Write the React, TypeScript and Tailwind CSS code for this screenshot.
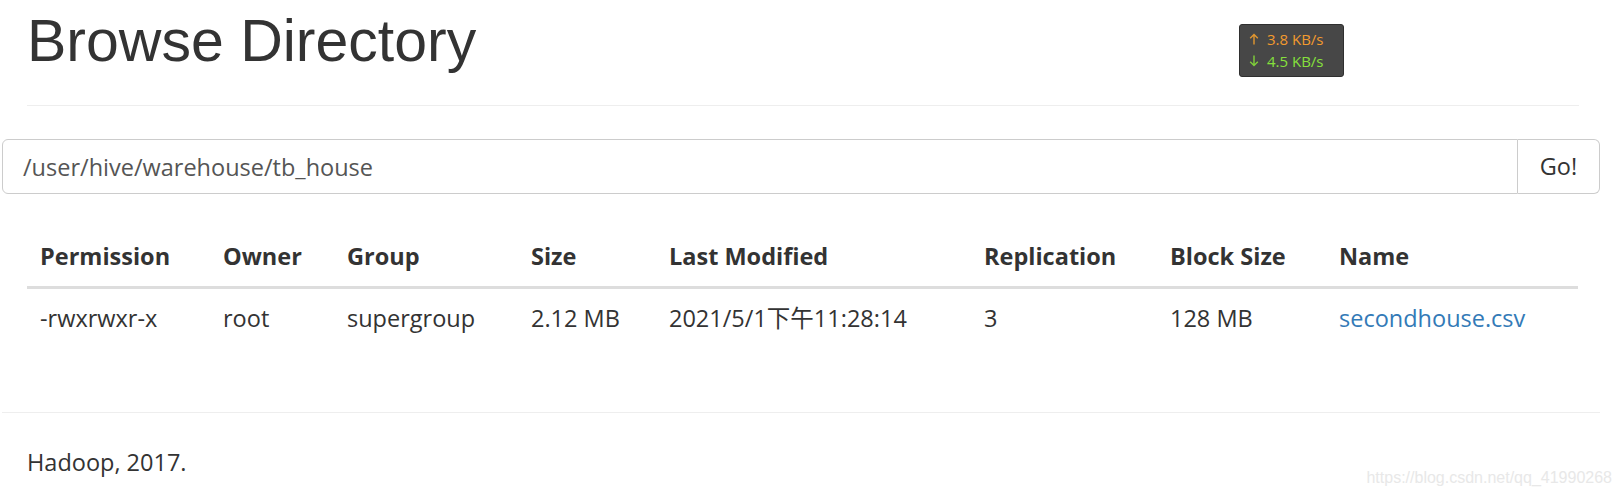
import React from "react";

const cols = ["Permission", "Owner", "Group", "Size", "Last Modified", "Replication", "Block Size", "Name"];

function UpArrow({ color }: { color: string }) {
  return (
    <svg width="10" height="12" viewBox="0 0 10 12" fill="none" stroke={color} strokeWidth="1.4">
      <path d="M5 11.5V1.5M1.2 5.2L5 1.4L8.8 5.2" />
    </svg>
  );
}

function DownArrow({ color }: { color: string }) {
  return (
    <svg width="10" height="12" viewBox="0 0 10 12" fill="none" stroke={color} strokeWidth="1.4">
      <path d="M5 0.5V10.5M1.2 6.8L5 10.6L8.8 6.8" />
    </svg>
  );
}

export default function App() {
  const body = { fontFamily: '"Open Sans", "Noto Sans CJK SC", sans-serif' };
  return (
    <div className="relative w-[1621px] h-[496px] bg-white overflow-hidden text-[#333]" style={body}>
      <div className="w-[1598px] ml-[2px]">
        <div className="pl-[25px] pr-[21px] pt-[9px]">
          <h1
            className="text-[59px] leading-[65px] font-normal text-[#333] m-0"
            style={{ fontFamily: '"Liberation Sans", Arial, sans-serif' }}
          >
            Browse Directory
          </h1>
          <div className="mt-[31px] h-px bg-[#eeeeee]" />
        </div>

        <div className="mt-[33px] flex h-[55px]">
          <div className="flex-1 flex items-center border border-[#cccccc] rounded-l-[6px] pl-[20px] pt-[1px] text-[23.5px] leading-[33px] text-[#555]">
            /user/hive/warehouse/tb_house
          </div>
          <div className="w-[82px] flex items-center justify-center border border-l-0 border-[#cccccc] rounded-r-[6px] text-[23.5px] leading-[33px] text-[#333]">
            Go!
          </div>
        </div>

        <div className="mt-[33px] pl-[25px] pr-[22px]">
          <div className="grid grid-cols-[183px_124px_184px_138px_315px_186px_169px_1fr] border-b-[3px] border-[#dddddd] text-[23.5px] leading-[33px] font-bold">
            {cols.map((c) => (
              <div key={c} className="px-[13px] py-[13px] whitespace-nowrap">
                {c}
              </div>
            ))}
          </div>
          <div className="grid grid-cols-[183px_124px_184px_138px_315px_186px_169px_1fr] text-[23.5px] leading-[33px]">
            <div className="px-[13px] py-[13px] whitespace-nowrap">-rwxrwxr-x</div>
            <div className="px-[13px] py-[13px] whitespace-nowrap">root</div>
            <div className="px-[13px] py-[13px] whitespace-nowrap">supergroup</div>
            <div className="px-[13px] py-[13px] whitespace-nowrap">2.12 MB</div>
            <div className="px-[13px] py-[13px] whitespace-nowrap">2021/5/1下午11:28:14</div>
            <div className="px-[13px] py-[13px] whitespace-nowrap">3</div>
            <div className="px-[13px] py-[13px] whitespace-nowrap">128 MB</div>
            <div className="px-[13px] py-[13px] whitespace-nowrap">
              <a className="text-[#337ab7]">secondhouse.csv</a>
            </div>
          </div>
        </div>

        <div className="mt-[64px] h-px bg-[#eeeeee]" />
        <div className="pl-[25px] pt-[33px] text-[23.5px] leading-[33px]">Hadoop, 2017.</div>
      </div>

      <div className="absolute left-[1239px] top-[24px] w-[105px] h-[53px] rounded-[3px] bg-[#474747] border border-[#2f2f2f] pl-[9px] pt-[3px] text-[15px] leading-[22px]">
        <div className="flex items-center gap-[8px] text-[#f29a2e]">
          <UpArrow color="#e0962f" />
          <span>3.8 KB/s</span>
        </div>
        <div className="flex items-center gap-[8px] text-[#86e03c]">
          <DownArrow color="#7fcf3a" />
          <span>4.5 KB/s</span>
        </div>
      </div>

      <div
        className="absolute right-[9px] bottom-[9px] text-[16px] leading-[18px] text-[#e8e8e8]"
        style={{ fontFamily: '"Liberation Sans", Arial, sans-serif' }}
      >
        https://blog.csdn.net/qq_41990268
      </div>
    </div>
  );
}
